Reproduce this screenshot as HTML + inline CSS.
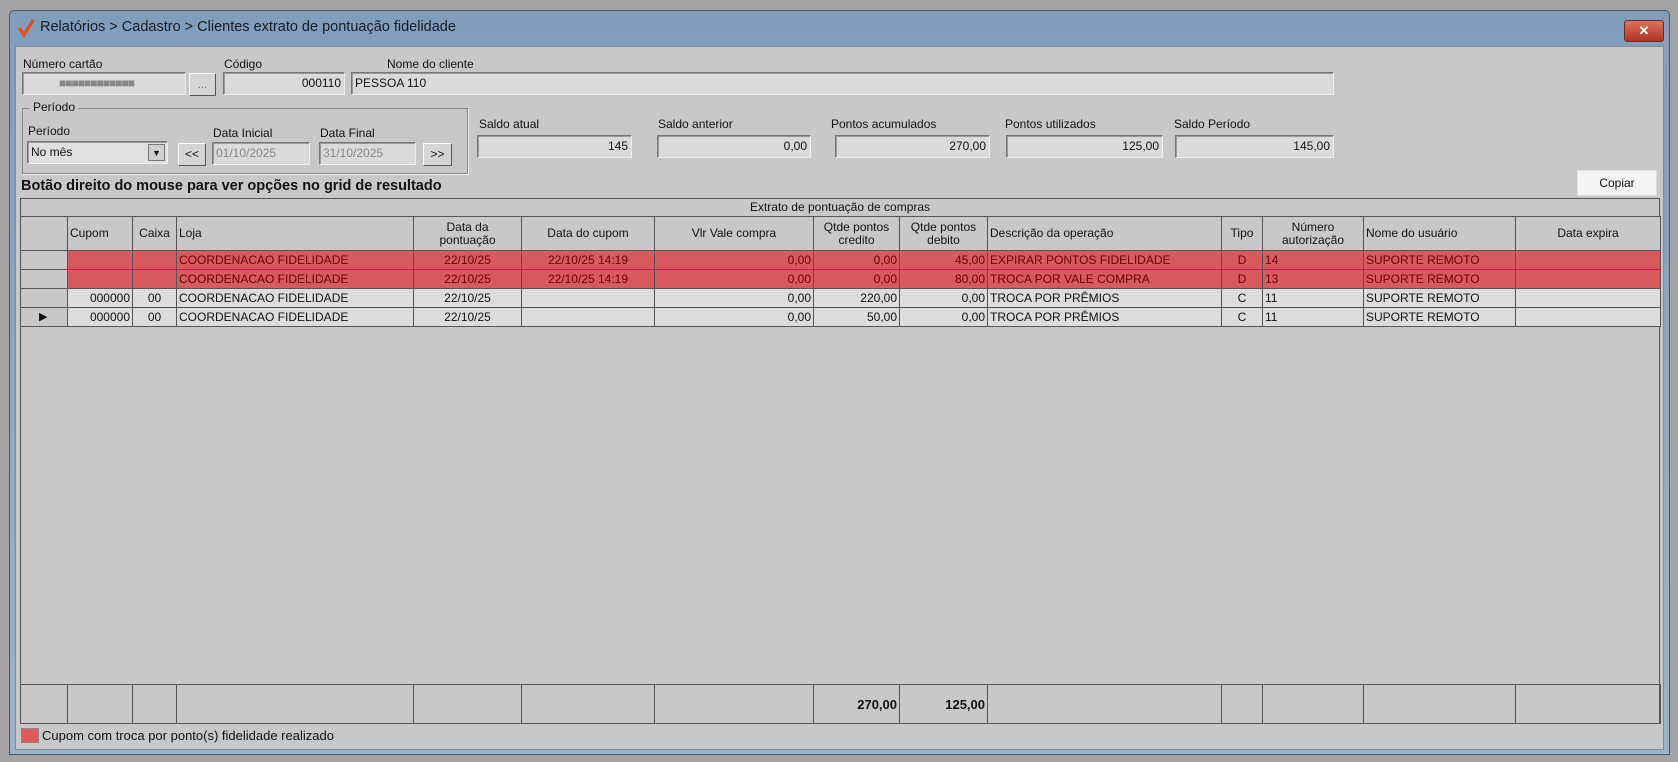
<!DOCTYPE html>
<html><head><meta charset="utf-8"><style>
*{box-sizing:border-box;margin:0;padding:0}
body{width:1678px;height:762px;background:#a3a3a3;font-family:"Liberation Sans",sans-serif;font-size:12px;color:#111;position:relative;overflow:hidden}
.a{position:absolute}
.win{left:9px;top:10px;width:1661px;height:745px;background:linear-gradient(#7f9dbd,#9bb3cc);border:1px solid #555;border-radius:5px 5px 0 0}
.title{left:40px;top:19px;font-size:14.5px;color:#1a1a1a}
.panel{left:15px;top:46px;width:1649px;height:704px;background:#c8c8c8;border:1px solid #888}
.inp{background:#dadada;border:1px solid #777;border-right-color:#eee;border-bottom-color:#eee;box-shadow:inset 1px 1px 0 #999;height:23px;line-height:21px;padding:0 3px;white-space:nowrap}
.r{text-align:right}
.btn{background:#d4d4d4;border:1px solid #fff;border-right-color:#555;border-bottom-color:#555;text-align:center;line-height:20px;height:23px}
.lbl{white-space:nowrap}
table{border-collapse:collapse;table-layout:fixed}
td{border:1px solid #555;height:19px;padding:0 2px;white-space:nowrap;overflow:hidden;font-size:12px;line-height:17px}
.hd td{height:34px;text-align:center;line-height:13px;background:#c8c8c8}
.red td{background:#d95a5c;color:#6a0000}
.nr td{background:#dcdcdc}
td.ind{background:#c8c8c8}
.c{text-align:center}
</style></head><body>
<div class="a win"></div>
<svg class="a" style="left:17px;top:18px" width="18" height="20"><path d="M2 10 L7 17 L16 2" stroke="#e0521a" stroke-width="3.5" fill="none"/></svg>
<div class="a title">Relatórios &gt; Cadastro &gt; Clientes extrato de pontuação fidelidade</div>
<div class="a" style="left:1624px;top:20px;width:40px;height:22px;background:linear-gradient(#d9735f,#b1321f);border:1px solid #6b2a20;border-radius:3px;color:#fff;text-align:center;font-weight:bold;line-height:19px;font-size:13px">✕</div>
<div class="a panel"></div>

<div class="a lbl" style="left:23px;top:57px">Número cartão</div>
<div class="a inp" style="left:22px;top:72px;width:164px"><span style="color:#888;margin-left:33px;letter-spacing:-1px">■■■■■■■■■■■■</span></div>
<div class="a btn" style="left:189px;top:73px;width:27px;color:#777">...</div>
<div class="a lbl" style="left:224px;top:57px">Código</div>
<div class="a inp r" style="left:223px;top:72px;width:122px">000110</div>
<div class="a lbl" style="left:387px;top:57px">Nome do cliente</div>
<div class="a inp" style="left:351px;top:72px;width:983px">PESSOA 110</div>

<div class="a" style="left:22px;top:108px;width:446px;height:66px;border:1px solid #888;box-shadow:1px 1px 0 #eee"></div>
<div class="a lbl" style="left:30px;top:100px;background:#c8c8c8;padding:0 3px">Período</div>
<div class="a lbl" style="left:28px;top:124px">Período</div>
<div class="a inp" style="left:27px;top:141px;width:141px;background:#e0e0e0">No mês<span style="position:absolute;right:2px;top:2px;width:17px;height:17px;background:#d0d0d0;border:1px solid #777;font-size:9px;line-height:16px;text-align:center">▼</span></div>
<div class="a btn" style="left:178px;top:143px;width:28px">&lt;&lt;</div>
<div class="a lbl" style="left:213px;top:126px">Data Inicial</div>
<div class="a inp" style="left:212px;top:142px;width:98px;color:#888">01/10/2025</div>
<div class="a lbl" style="left:320px;top:126px">Data Final</div>
<div class="a inp" style="left:319px;top:142px;width:97px;color:#888">31/10/2025</div>
<div class="a btn" style="left:423px;top:143px;width:29px">&gt;&gt;</div>

<div class="a lbl" style="left:479px;top:117px">Saldo atual</div>
<div class="a inp r" style="left:477px;top:135px;width:155px">145</div>
<div class="a lbl" style="left:658px;top:117px">Saldo anterior</div>
<div class="a inp r" style="left:657px;top:135px;width:154px">0,00</div>
<div class="a lbl" style="left:831px;top:117px">Pontos acumulados</div>
<div class="a inp r" style="left:835px;top:135px;width:155px">270,00</div>
<div class="a lbl" style="left:1005px;top:117px">Pontos utilizados</div>
<div class="a inp r" style="left:1006px;top:135px;width:157px">125,00</div>
<div class="a lbl" style="left:1174px;top:117px">Saldo Período</div>
<div class="a inp r" style="left:1175px;top:135px;width:159px">145,00</div>

<div class="a lbl" style="left:21px;top:178px;font-weight:bold;font-size:14.5px">Botão direito do mouse para ver opções no grid de resultado</div>
<div class="a" style="left:1577px;top:170px;width:80px;height:26px;background:#f4f4f4;border:1px solid #ddd;text-align:center;line-height:25px">Copiar</div>

<div class="a" style="left:20px;top:198px;width:1640px;height:526px;border:1px solid #555;background:#c8c8c8"></div>
<div class="a" style="left:20px;top:198px;width:1640px;height:19px;border:1px solid #555;text-align:center;line-height:17px">Extrato de pontuação de compras</div>
<table class="a" style="left:20px;top:216px;width:1640px">
<colgroup><col style="width:47px"><col style="width:65px"><col style="width:44px"><col style="width:237px"><col style="width:108px"><col style="width:133px"><col style="width:159px"><col style="width:86px"><col style="width:88px"><col style="width:234px"><col style="width:41px"><col style="width:101px"><col style="width:152px"><col style="width:145px"></colgroup>
<tr class="hd"><td></td><td style="text-align:left">Cupom</td><td>Caixa</td><td style="text-align:left">Loja</td><td>Data da<br>pontuação</td><td>Data do cupom</td><td>Vlr Vale compra</td><td>Qtde pontos<br>credito</td><td>Qtde pontos<br>debito</td><td style="text-align:left">Descrição da operação</td><td>Tipo</td><td>Número<br>autorização</td><td style="text-align:left">Nome do usuário</td><td>Data expira</td></tr>
<tr class="red"><td class="ind"></td><td></td><td></td><td>COORDENACAO FIDELIDADE</td><td class="c">22/10/25</td><td class="c">22/10/25 14:19</td><td class="r">0,00</td><td class="r">0,00</td><td class="r">45,00</td><td>EXPIRAR PONTOS FIDELIDADE</td><td class="c">D</td><td>14</td><td>SUPORTE REMOTO</td><td></td></tr>
<tr class="red"><td class="ind"></td><td></td><td></td><td>COORDENACAO FIDELIDADE</td><td class="c">22/10/25</td><td class="c">22/10/25 14:19</td><td class="r">0,00</td><td class="r">0,00</td><td class="r">80,00</td><td>TROCA POR VALE COMPRA</td><td class="c">D</td><td>13</td><td>SUPORTE REMOTO</td><td></td></tr>
<tr class="nr"><td class="ind"></td><td class="r">000000</td><td class="c">00</td><td>COORDENACAO FIDELIDADE</td><td class="c">22/10/25</td><td></td><td class="r">0,00</td><td class="r">220,00</td><td class="r">0,00</td><td>TROCA POR PRÊMIOS</td><td class="c">C</td><td>11</td><td>SUPORTE REMOTO</td><td></td></tr>
<tr class="nr"><td class="ind" style="padding-left:18px;font-size:11px">▶</td><td class="r">000000</td><td class="c">00</td><td>COORDENACAO FIDELIDADE</td><td class="c">22/10/25</td><td></td><td class="r">0,00</td><td class="r">50,00</td><td class="r">0,00</td><td>TROCA POR PRÊMIOS</td><td class="c">C</td><td>11</td><td>SUPORTE REMOTO</td><td></td></tr>
</table>
<table class="a" style="left:20px;top:684px;width:1640px">
<colgroup><col style="width:47px"><col style="width:65px"><col style="width:44px"><col style="width:237px"><col style="width:108px"><col style="width:133px"><col style="width:159px"><col style="width:86px"><col style="width:88px"><col style="width:234px"><col style="width:41px"><col style="width:101px"><col style="width:152px"><col style="width:145px"></colgroup>
<tr><td style="height:39px"></td><td></td><td></td><td></td><td></td><td></td><td></td><td class="r" style="font-weight:bold;font-size:13px">270,00</td><td class="r" style="font-weight:bold;font-size:13px">125,00</td><td></td><td></td><td></td><td></td><td></td></tr>
</table>
<div class="a" style="left:21px;top:728px;width:18px;height:15px;background:#dd5a5c;border:1px solid #888"></div>
<div class="a lbl" style="left:42px;top:728px;font-size:13px">Cupom com troca por ponto(s) fidelidade realizado</div>
</body></html>
